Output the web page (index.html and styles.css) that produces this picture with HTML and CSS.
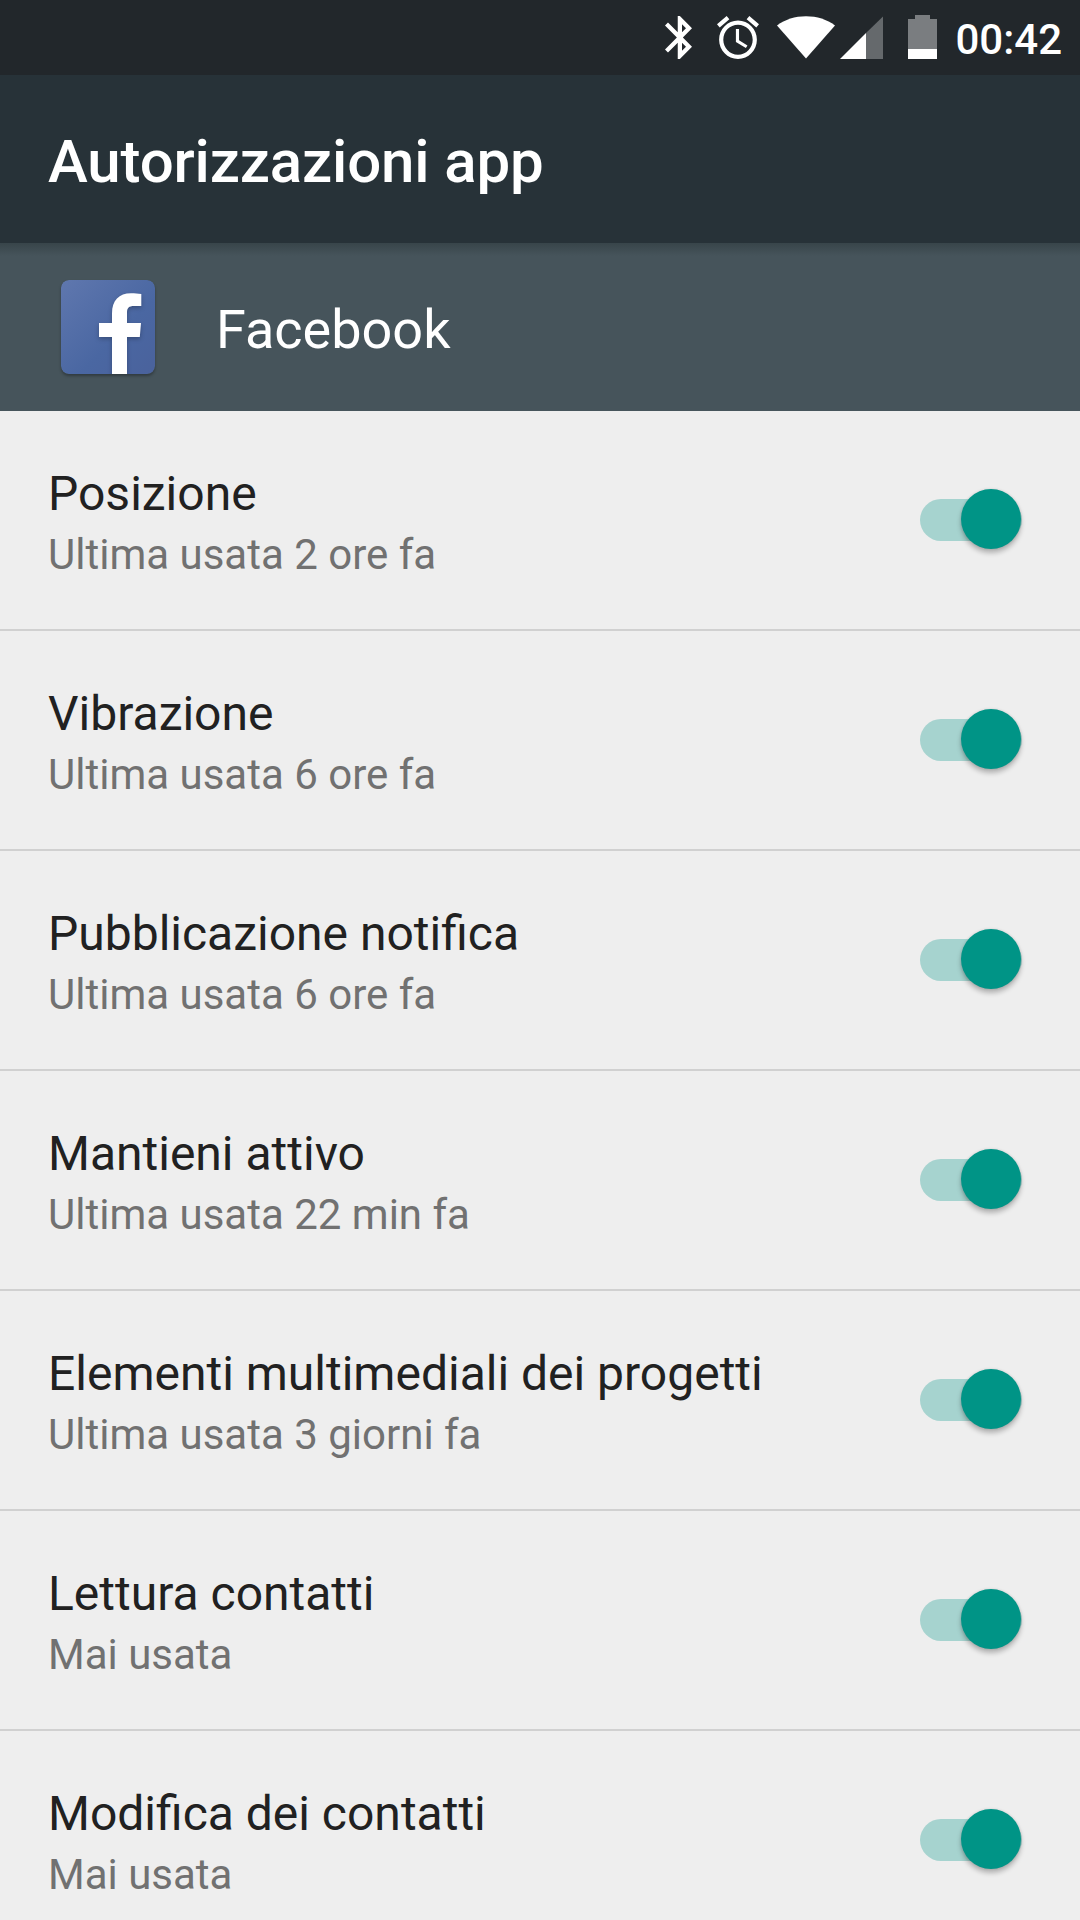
FILE: index.html
```html
<!DOCTYPE html>
<html lang="it">
<head>
    <meta charset="UTF-8">
    <meta name="viewport" content="width=device-width, initial-scale=1.0">
    <title>Autorizzazioni app</title>
    <link rel="stylesheet" href="styles.css">
</head>
<body>
    <div class="status-bar">
        <svg class="bluetooth" viewBox="5 2 12.71 20" preserveAspectRatio="none">
            <path d="M17.71 7.71L12 2h-1v7.59L6.41 5 5 6.41 10.59 12 5 17.59 6.41 19 11 14.41V22h1l5.71-5.71-4.3-4.29 4.3-4.29zM13 5.83l1.88 1.88L13 9.59V5.83zm1.88 10.46L13 18.17v-3.76l1.88 1.88z"/>
        </svg>
        <svg class="alarm" viewBox="2 1.86 20 20.14" preserveAspectRatio="none">
            <path d="M22 5.72l-4.6-3.86-1.29 1.53 4.6 3.86L22 5.72zM7.88 3.39L6.6 1.86 2 5.71l1.29 1.53 4.59-3.85zM12.5 8H11v6l4.75 2.85.75-1.23-4-2.37V8zM12 4c-4.97 0-9 4.03-9 9s4.02 9 9 9c4.97 0 9-4.03 9-9s-4.03-9-9-9zm0 16c-3.87 0-7-3.13-7-7s3.13-7 7-7 7 3.13 7 7-3.13 7-7 7z"/>
        </svg>
        <svg class="wifi" viewBox="0 0 58 43">
            <path d="M29 42.5L0 9.5C8 3.5 18 .3 29 .3s21 3.2 29 9.2z"/>
        </svg>
        <svg class="signal" viewBox="0 0 43 43">
            <path class="dim" d="M26 17L43 .5V43H26z"/>
            <path d="M0 43L26 17v26z"/>
        </svg>
        <svg class="battery" viewBox="0 0 29 44">
            <path class="dim" d="M0 4h7V0h15v4h7v30H0z"/>
            <path d="M0 34h29v10H0z"/>
        </svg>
        <span class="clock">00:42</span>
    </div>

    <header class="title-bar">
        <h1>Autorizzazioni app</h1>
    </header>

    <div class="app-header">
        <svg class="app-icon" viewBox="0 0 94 94">
            <defs>
                <linearGradient id="blue" x1="0" y1="0" x2="1" y2="1">
                    <stop offset="0" stop-color="#5f77ae"/>
                    <stop offset="0.6" stop-color="#4a67a2"/>
                    <stop offset="1" stop-color="#4a629c"/>
                </linearGradient>
            </defs>
            <rect width="94" height="94" rx="8" fill="url(#blue)"/>
            <path class="letter" d="M51 94V57H38V43h13V33.500c0-13 7-20.200 19-20.200 4 0 7 .2 10.300 .8V26H73c-5 0-7 2-7 6.500V43h14l-1.200 14H66v37z"/>
        </svg>
        <span class="app-name">Facebook</span>
    </div>

    <div class="permissions">
        <div class="permission">
            <div class="text">
                <div class="name">Posizione</div>
                <div class="summary">Ultima usata 2 ore fa</div>
            </div>
            <div class="switch"><div class="thumb"></div></div>
        </div>
        <div class="permission">
            <div class="text">
                <div class="name">Vibrazione</div>
                <div class="summary">Ultima usata 6 ore fa</div>
            </div>
            <div class="switch"><div class="thumb"></div></div>
        </div>
        <div class="permission">
            <div class="text">
                <div class="name">Pubblicazione notifica</div>
                <div class="summary">Ultima usata 6 ore fa</div>
            </div>
            <div class="switch"><div class="thumb"></div></div>
        </div>
        <div class="permission">
            <div class="text">
                <div class="name">Mantieni attivo</div>
                <div class="summary">Ultima usata 22 min fa</div>
            </div>
            <div class="switch"><div class="thumb"></div></div>
        </div>
        <div class="permission">
            <div class="text">
                <div class="name">Elementi multimediali dei progetti</div>
                <div class="summary">Ultima usata 3 giorni fa</div>
            </div>
            <div class="switch"><div class="thumb"></div></div>
        </div>
        <div class="permission">
            <div class="text">
                <div class="name">Lettura contatti</div>
                <div class="summary">Mai usata</div>
            </div>
            <div class="switch"><div class="thumb"></div></div>
        </div>
        <div class="permission">
            <div class="text">
                <div class="name">Modifica dei contatti</div>
                <div class="summary">Mai usata</div>
            </div>
            <div class="switch"><div class="thumb"></div></div>
        </div>
    </div>
</body>
</html>
```

FILE: styles.css
```css
* {
    box-sizing: border-box;
}
body {
    margin: 0;
    height: 1920px;
    overflow: hidden;
    background-color: #eeeeee;
    font-family: Roboto, sans-serif;
}
.status-bar {
    display: flex;
    justify-content: flex-end;
    align-items: flex-start;
    height: 75px;
    padding: 16px 18px 0 0;
    background-color: #22272b;
    color: white;
}
.status-bar svg {
    fill: white;
    flex-shrink: 0;
}
.status-bar .dim {
    fill: #65696c;
}
.bluetooth {
    width: 27px;
    height: 43px;
    margin-right: 25px;
}
.alarm {
    width: 42px;
    height: 43px;
    margin-right: 18px;
}
.wifi {
    width: 58px;
    height: 43px;
    margin-right: 5px;
}
.signal {
    width: 43px;
    height: 43px;
    margin-right: 25px;
}
.battery {
    width: 29px;
    height: 44px;
    margin-top: -1px;
    margin-right: 18px;
}
.status-bar .battery .dim {
    fill: #7a7d80;
}
.clock {
    font-size: 42px;
    font-weight: 500;
    line-height: 48px;
}
.title-bar {
    height: 168px;
    padding: 52px 48px 0;
    background-color: #273238;
    color: white;
}
.title-bar h1 {
    margin: 0;
    font-size: 60px;
    font-weight: 500;
    line-height: 70px;
    letter-spacing: -0.15px;
}
.app-header {
    display: flex;
    align-items: flex-start;
    height: 168px;
    padding: 37px 61px 0;
    background: linear-gradient(#38454a, #46545b 13px);
    color: white;
}
.app-icon {
    width: 94px;
    height: 94px;
    margin-right: 61px;
    border-radius: 8px;
    box-shadow: 0 2px 3px rgba(0,0,0,0.3);
}
.letter {
    fill: white;
    filter: drop-shadow(0 2px 2px rgba(0,0,0,0.25));
}
.app-name {
    padding-top: 18px;
    font-size: 54px;
    line-height: 64px;
}
.permission {
    display: flex;
    justify-content: space-between;
    height: 220px;
    padding: 55px 58px 0 48px;
    border-bottom: 2px solid #d0d0d0;
}
.name {
    font-size: 48px;
    line-height: 56px;
    color: #212121;
}
.summary {
    margin-top: 8px;
    font-size: 42px;
    line-height: 50px;
    color: #717171;
}
.switch {
    display: flex;
    justify-content: flex-end;
    align-items: center;
    width: 102px;
    height: 42px;
    margin-top: 33px;
    border-radius: 21px;
    background-color: #a6d3cf;
}
.thumb {
    flex-shrink: 0;
    width: 60px;
    height: 60px;
    margin-right: 1px;
    margin-bottom: 2px;
    border-radius: 50%;
    background-color: #009486;
    box-shadow: 0 4px 5px rgba(0,0,0,0.25), 0 0 3px rgba(0,0,0,0.12);
}
```
